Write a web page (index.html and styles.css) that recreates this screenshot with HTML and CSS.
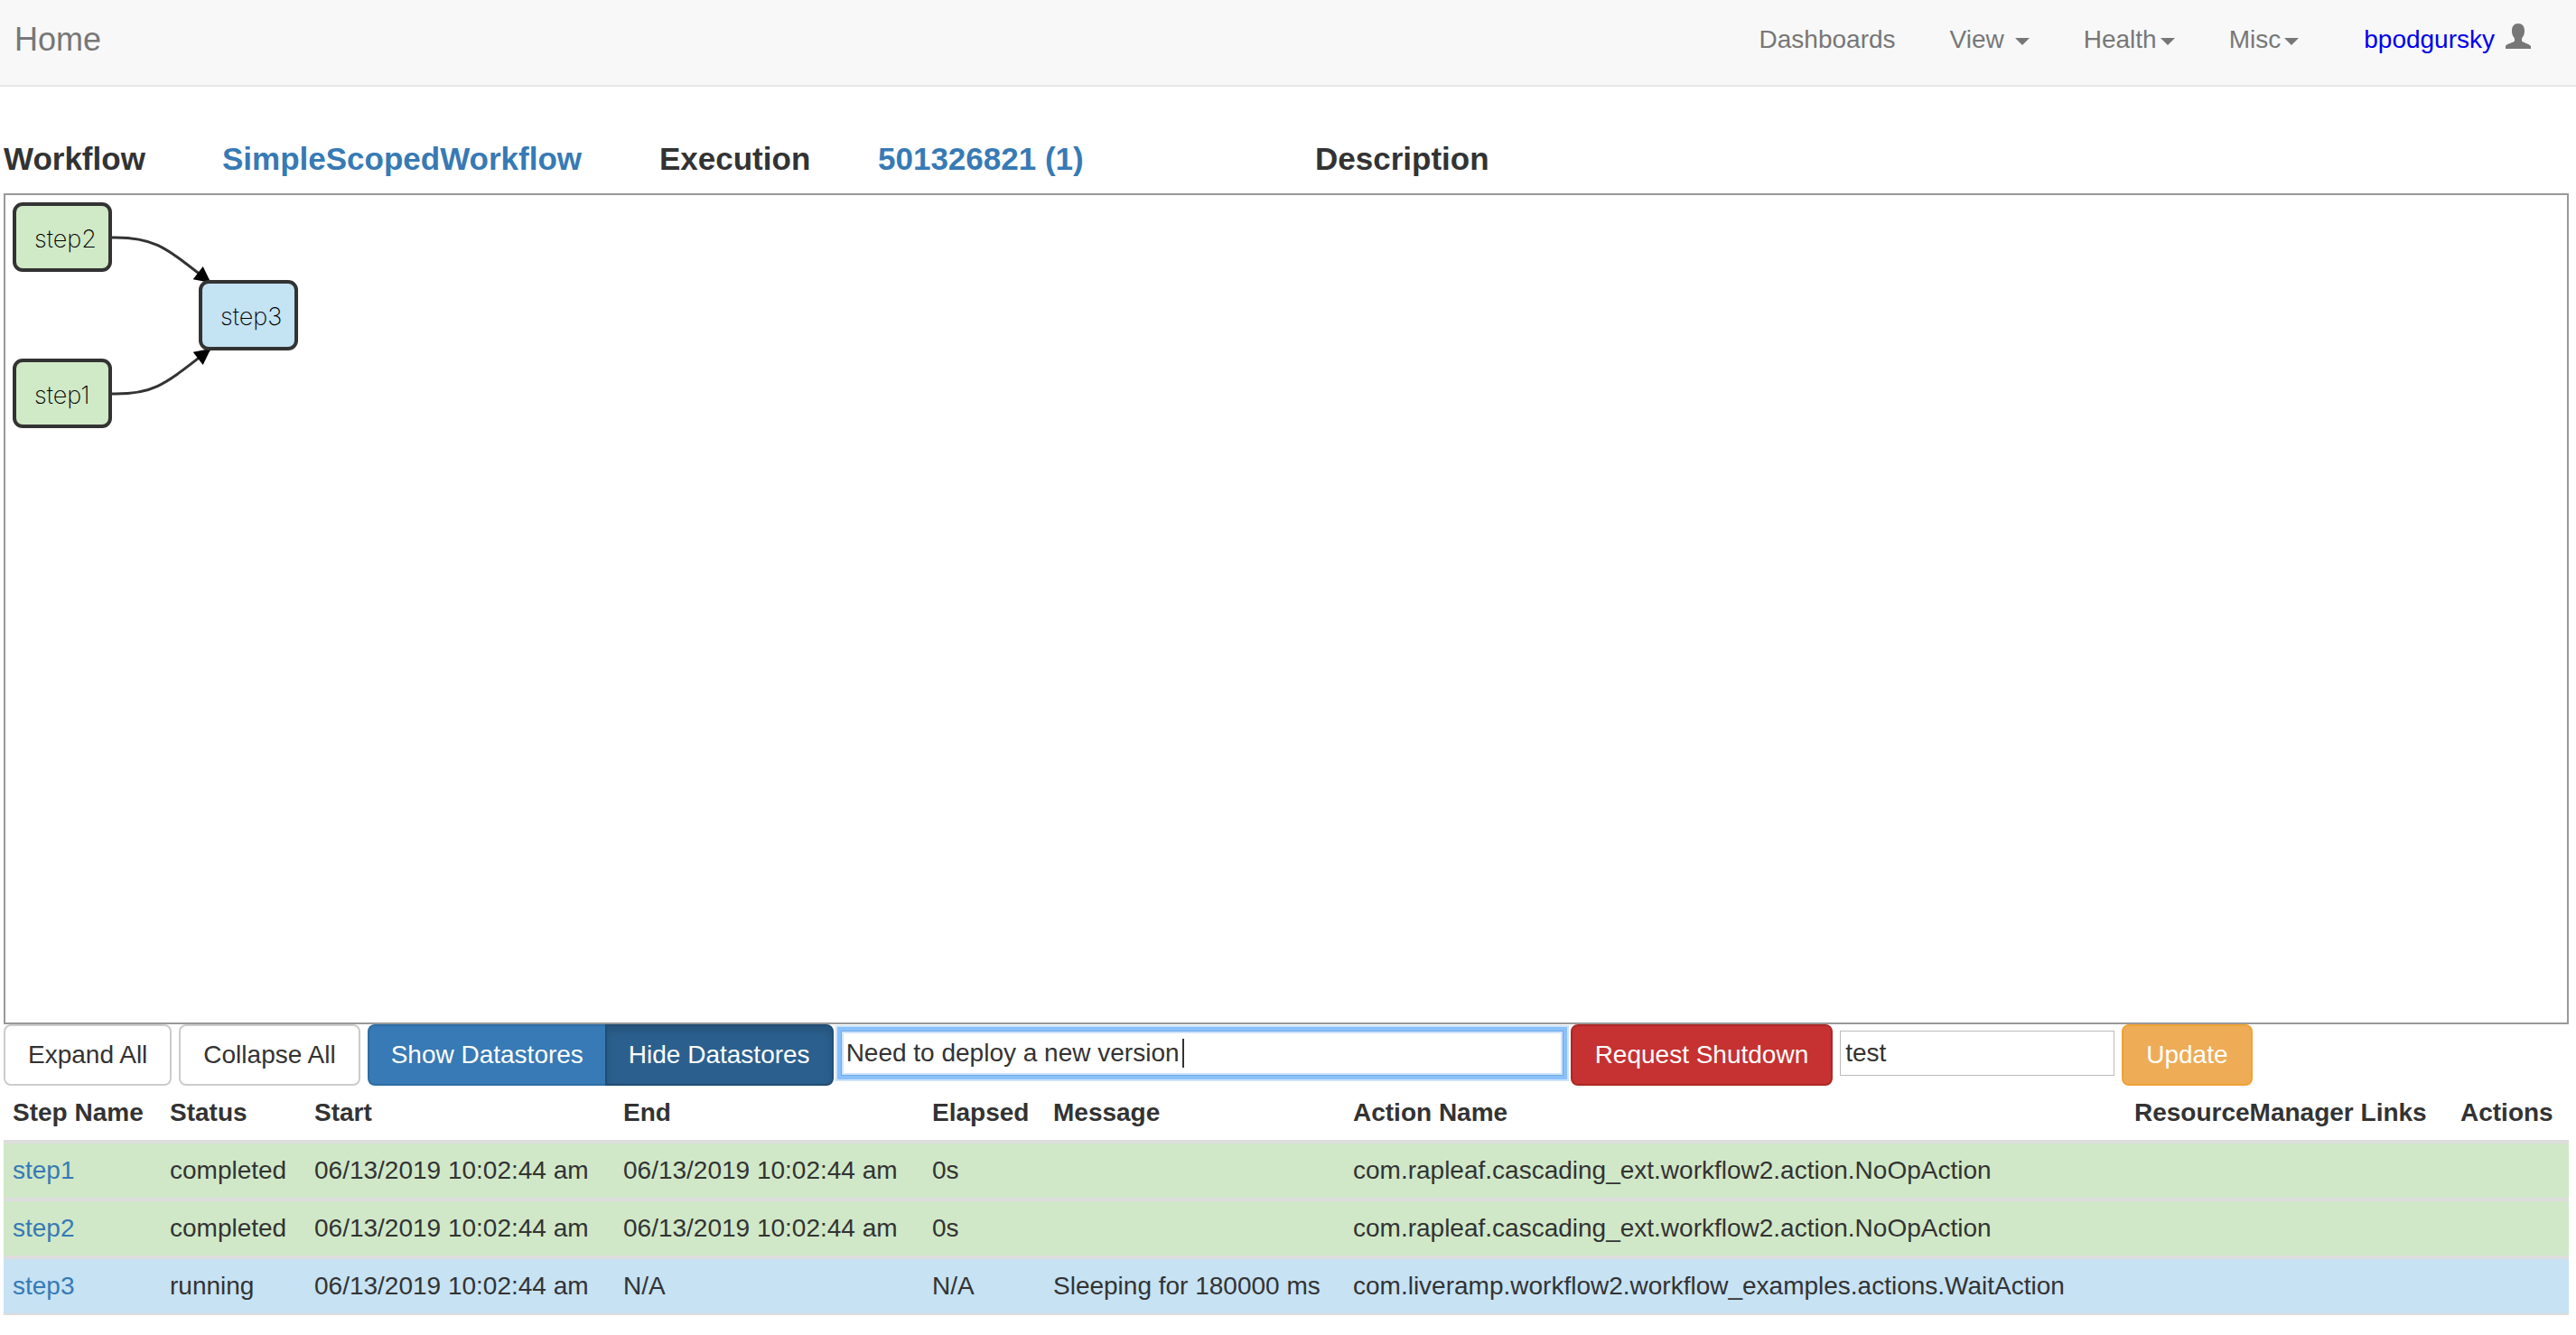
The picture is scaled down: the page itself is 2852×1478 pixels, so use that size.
FILE: index.html
```html
<!DOCTYPE html>
<html lang="en">
<head>
<meta charset="utf-8">
<title>SimpleScopedWorkflow</title>
<meta name="viewport" content="width=device-width, initial-scale=1">
<link rel="stylesheet" href="styles.css">
</head>
<body>
<nav class="navbar">
  <a class="brand" href="#">Home</a>
  <ul class="nav">
    <li><a class="nav-link" href="#">Dashboards</a></li>
    <li><a class="nav-link nav-link-spaced" href="#">View<span class="caret"></span></a></li>
    <li><a class="nav-link" href="#">Health<span class="caret"></span></a></li>
    <li><a class="nav-link" href="#">Misc<span class="caret"></span></a></li>
    <li class="nav-user"><a class="nav-link user" href="#">bpodgursky<svg class="user-icon" viewBox="0 0 28 28" aria-hidden="true"><path d="M14 0C18.500 0 21 3 21 8C21 12.500 19.500 14.500 18 16.500V19.500C19.500 21 26.500 22.500 28 25V28H0V25C1.500 22.500 8.500 21 10 19.500V16.500C8.500 14.500 7 12.500 7 8C7 3 9.500 0 14 0Z" fill="#777"/></svg></a></li>
  </ul>
</nav>

<main class="page">
  <header class="summary">
    <h4>Workflow</h4>
    <h4><a href="#">SimpleScopedWorkflow</a></h4>
    <h4>Execution</h4>
    <h4><a href="#">501326821 (1)</a></h4>
    <h4>Description</h4>
  </header>

  <section class="graph">
    <svg class="graph-svg" aria-label="Workflow graph">
      <defs>
        <marker id="arrow" viewBox="0 0 10 10" refX="9" refY="5" markerUnits="userSpaceOnUse" markerWidth="20" markerHeight="18" orient="auto">
          <path d="M0 0L10 5L0 10Z"/>
        </marker>
      </defs>
      <path class="edge" d="M118 47C165 46 177 58 226 96" marker-end="url(#arrow)"/>
      <path class="edge" d="M118 220C165 221 177 209 226 171" marker-end="url(#arrow)"/>
      <g class="node node-done">
        <rect x="10" y="10" width="106" height="73" rx="9"/>
        <text x="32" y="58">step2</text>
      </g>
      <g class="node node-done">
        <rect x="10" y="183" width="106" height="73" rx="9"/>
        <text x="32" y="231">step1</text>
      </g>
      <g class="node node-running">
        <rect x="216" y="96" width="106" height="74" rx="9"/>
        <text x="238" y="144">step3</text>
      </g>
    </svg>
  </section>

  <form class="toolbar">
    <button class="btn" type="button">Expand All</button>
    <button class="btn" type="button">Collapse All</button>
    <div class="btn-group">
      <button class="btn btn-primary" type="button">Show Datastores</button>
      <button class="btn btn-primary btn-active" type="button">Hide Datastores</button>
    </div>
    <input class="field field-reason" type="text" value="Need to deploy a new version" aria-label="Shutdown reason">
    <button class="btn btn-danger" type="button">Request Shutdown</button>
    <input class="field field-pool" type="text" value="test" aria-label="Pool">
    <button class="btn btn-warning" type="button">Update</button>
  </form>

  <table class="steps">
    <colgroup>
      <col class="col-name"><col class="col-status"><col class="col-time"><col class="col-time"><col class="col-elapsed"><col class="col-message"><col><col class="col-links"><col class="col-actions">
    </colgroup>
    <thead>
      <tr><th>Step Name</th><th>Status</th><th>Start</th><th>End</th><th>Elapsed</th><th>Message</th><th>Action Name</th><th>ResourceManager Links</th><th>Actions</th></tr>
    </thead>
    <tbody>
      <tr class="row-done"><td><a href="#">step1</a></td><td>completed</td><td>06/13/2019 10:02:44 am</td><td>06/13/2019 10:02:44 am</td><td>0s</td><td></td><td>com.rapleaf.cascading_ext.workflow2.action.NoOpAction</td><td></td><td></td></tr>
      <tr class="row-done"><td><a href="#">step2</a></td><td>completed</td><td>06/13/2019 10:02:44 am</td><td>06/13/2019 10:02:44 am</td><td>0s</td><td></td><td>com.rapleaf.cascading_ext.workflow2.action.NoOpAction</td><td></td><td></td></tr>
      <tr class="row-running"><td><a href="#">step3</a></td><td>running</td><td>06/13/2019 10:02:44 am</td><td>N/A</td><td>N/A</td><td>Sleeping for 180000 ms</td><td>com.liveramp.workflow2.workflow_examples.actions.WaitAction</td><td></td><td></td></tr>
    </tbody>
  </table>
</main>
</body>
</html>
```
FILE: styles.css
```css
* {
  box-sizing: border-box;
}

body {
  margin: 0;
  background: #fff;
  color: #333;
  font: 28px/40px "Liberation Sans", Arial, sans-serif;
}

a {
  color: #377ab5;
  text-decoration: none;
}

.navbar {
  display: flex;
  justify-content: space-between;
  padding: 24px 50px 30px 16px;
  background: #f8f8f8;
  border-bottom: 2px solid #e7e7e7;
}

.brand {
  color: #777;
  font-size: 36px;
}

.nav {
  display: flex;
  gap: 60px;
  margin: 0;
  padding: 0;
  list-style: none;
}

.nav-link {
  display: flex;
  align-items: center;
  gap: 4px;
  color: #777;
}

.nav-link-spaced {
  gap: 12px;
}

.nav-user {
  margin-left: 12px;
}

.user {
  gap: 12px;
  color: #00e;
}

.caret {
  border-top: 8px solid #777;
  border-left: 8px solid transparent;
  border-right: 8px solid transparent;
  margin-top: 4px;
}

.user-icon {
  width: 28px;
  height: 28px;
  margin-bottom: 8px;
}

.page {
  padding: 58px 8px 20px 4px;
}

.summary {
  display: grid;
  grid-template-columns: 242fr 484fr 242fr 484fr 1388fr;
  margin-bottom: 16px;
}

.summary h4 {
  margin: 0;
  font-size: 35px;
  line-height: 44px;
}

.graph {
  border: 2px solid #999;
}

.graph-svg {
  display: block;
  width: 100%;
  height: 916px;
}

.node rect {
  stroke: #333;
  stroke-width: 4px;
}

.node text {
  font-family: Inter, "Liberation Sans", sans-serif;
  font-size: 27px;
  font-weight: 200;
}

.node-done rect {
  fill: #d0e9c6;
}

.node-running rect {
  fill: #c4e3f3;
}

.edge {
  fill: none;
  stroke: #333;
  stroke-width: 3px;
}

.toolbar {
  display: flex;
  gap: 8px;
}

.btn {
  padding: 12px 25px;
  border: 2px solid #ccc;
  border-radius: 8px;
  background: #fff;
  color: #333;
  font: inherit;
  white-space: nowrap;
}

.btn-group {
  display: flex;
}

.btn-group .btn {
  padding: 12px 24px;
}

.btn-group .btn:first-child {
  border-right: 0;
  border-radius: 8px 0 0 8px;
}

.btn-group .btn:last-child {
  border-radius: 0 8px 8px 0;
}

.btn-primary {
  background: #377ab5;
  border-color: #2e6da4;
  color: #fff;
}

.btn-active {
  background: #2b608e;
  border-color: #204d74;
  box-shadow: inset 0 6px 10px rgba(0, 0, 0, 0.125);
}

.btn-danger {
  background: #c63131;
  border-color: #ac2925;
  color: #fff;
}

.btn-warning {
  background: #eeac57;
  border-color: #eea236;
  color: #fff;
}

.field {
  height: 50px;
  margin: 7px 0 0;
  padding: 0 5px;
  border: 1px solid #bbb;
  background: #fff;
  color: #333;
  font: inherit;
}

.field-reason {
  width: 800px;
  border-color: #6fa9e8;
  outline: 0;
  background: linear-gradient(#333, #333) 377px 8px / 2px 32px no-repeat #fff;
  box-shadow: 0 0 0 4px #8ac0fb, 0 0 0 6px #cde4fd, inset 0 0 0 2px #cde4fd;
}

.field-pool {
  width: 304px;
}

.steps {
  width: 100%;
  table-layout: fixed;
  border-collapse: separate;
  border-spacing: 0;
  border-bottom: 2px solid #ddd;
}

.steps th,
.steps td {
  padding: 10px;
  text-align: left;
  white-space: nowrap;
}

.steps td {
  border-top: 4px solid #ddd;
}

.row-done {
  background: #d0e8c8;
}

.row-running {
  background: #c6e2f3;
}

.col-name {
  width: 174px;
}

.col-status {
  width: 160px;
}

.col-time {
  width: 342px;
}

.col-elapsed {
  width: 134px;
}

.col-message {
  width: 332px;
}

.col-links {
  width: 361px;
}

.col-actions {
  width: 130px;
}
```
